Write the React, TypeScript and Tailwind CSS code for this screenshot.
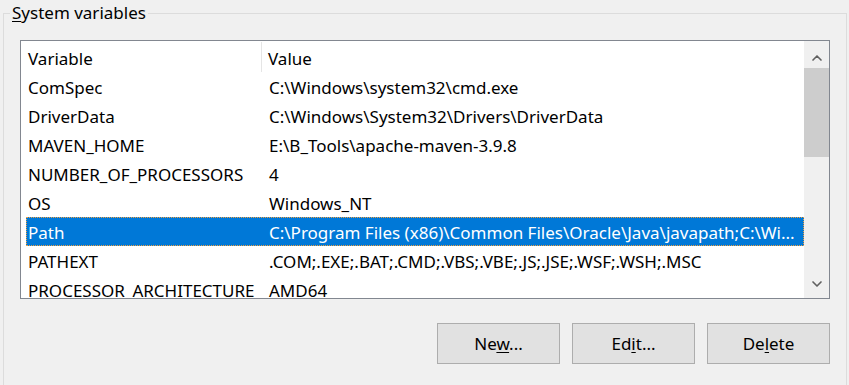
import { ChevronUp, ChevronDown } from "lucide-react";

const rows: { name: string; value: string; selected?: boolean }[] = [
  { name: "ComSpec", value: "C:\\Windows\\system32\\cmd.exe" },
  { name: "DriverData", value: "C:\\Windows\\System32\\Drivers\\DriverData" },
  { name: "MAVEN_HOME", value: "E:\\B_Tools\\apache-maven-3.9.8" },
  { name: "NUMBER_OF_PROCESSORS", value: "4" },
  { name: "OS", value: "Windows_NT" },
  {
    name: "Path",
    value: "C:\\Program Files (x86)\\Common Files\\Oracle\\Java\\javapath;C:\\Wi...",
    selected: true,
  },
  { name: "PATHEXT", value: ".COM;.EXE;.BAT;.CMD;.VBS;.VBE;.JS;.JSE;.WSF;.WSH;.MSC" },
  { name: "PROCESSOR_ARCHITECTURE", value: "AMD64" },
];

function DialogButton({ label, hotkey }: { label: string; hotkey: number }) {
  return (
    <button className="w-[123px] h-[41px] bg-[#e1e1e1] border border-[#adadad] text-[17px] text-black">
      {label.slice(0, hotkey)}
      <span className="underline underline-offset-2">{label[hotkey]}</span>
      {label.slice(hotkey + 1)}
    </button>
  );
}

export default function App() {
  return (
    <div
      className="w-[849px] h-[385px] overflow-hidden bg-[#f0f0f0] text-black pl-[3px] pr-[2px]"
      style={{ fontFamily: '"Noto Sans", "Open Sans", sans-serif' }}
    >
      <fieldset className="border border-[#dcdcdc] h-[420px] mt-[2px] pl-[16px] pr-[16px]">
        <legend className="-ml-[10px] px-[2px] text-[17px] leading-[22px]">
          <span className="underline underline-offset-2">S</span>ystem variables
        </legend>

        {/* list view */}
        <div className="mt-[16px] h-[259px] border border-[#828790] bg-white flex">
          <div className="flex-1 min-w-0 overflow-hidden">
            {/* header */}
            <div className="flex h-[31px] items-center text-[17px]">
              <div className="w-[241px] pl-[7px] pt-[4px] border-r border-[#e5e5e5] h-[30px] flex items-center">
                Variable
              </div>
              <div className="pl-[6px] pt-[4px]">Value</div>
            </div>
            {rows.map((r) => (
              <div
                key={r.name}
                className={[
                  "flex h-[29px] items-center pt-[2px] text-[17px] ml-[5px] whitespace-nowrap",
                  r.selected
                    ? "bg-[#0078d7] text-white outline outline-1 outline-dotted outline-[#f0a040] -outline-offset-1"
                    : "",
                ].join(" ")}
              >
                <div className="w-[236px] pl-[2px] overflow-hidden">{r.name}</div>
                <div className="pl-[7px]">{r.value}</div>
              </div>
            ))}
          </div>

          {/* scrollbar */}
          <div className="w-[25px] bg-[#f0f0f0] flex flex-col items-center">
            <div className="h-[27px] flex items-center justify-center pt-[6px]">
              <ChevronUp size={16} strokeWidth={2.5} className="text-[#606060]" />
            </div>
            <div className="w-full h-[89px] bg-[#cdcdcd]" />
            <div className="flex-1" />
            <div className="h-[27px] flex items-center justify-center pb-[2px]">
              <ChevronDown size={16} strokeWidth={2.5} className="text-[#606060]" />
            </div>
          </div>
        </div>

        <div className="flex justify-end gap-[12px] mt-[24px]">
          <DialogButton label="New..." hotkey={2} />
          <DialogButton label="Edit..." hotkey={2} />
          <DialogButton label="Delete" hotkey={2} />
        </div>
      </fieldset>
    </div>
  );
}
